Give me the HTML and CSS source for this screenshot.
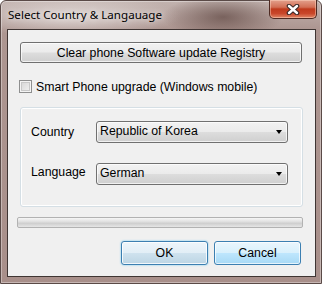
FILE: index.html
```html
<!DOCTYPE html>
<html lang="en">
<head>
    <meta charset="UTF-8">
    <title>Select Country &amp; Langauage</title>
    <link rel="stylesheet" href="styles.css">
</head>
<body>
    <div class="window">
        <div class="titlebar">
            <span class="title">Select Country &amp; Langauage</span>
            <button class="close">
                <svg width="14" height="11" viewBox="0 0 14 11">
                    <path d="M3 2 L11 9 M11 2 L3 9" stroke="#3b2a28" stroke-width="4.6" stroke-linecap="round"/>
                    <path d="M3 2 L11 9 M11 2 L3 9" stroke="#ffffff" stroke-width="2.4" stroke-linecap="round"/>
                </svg>
            </button>
        </div>

        <div class="client">
            <button class="btn btn-wide">Clear phone Software update Registry</button>

            <label class="check">
                <span class="box"></span>
                Smart Phone upgrade (Windows mobile)
            </label>

            <div class="group">
                <div class="field">
                    <span class="label">Country</span>
                    <div class="combo">Republic of Korea<span class="arrow"></span></div>
                </div>
                <div class="field">
                    <span class="label label-low">Language</span>
                    <div class="combo">German<span class="arrow"></span></div>
                </div>
            </div>

            <div class="progress"></div>

            <div class="actions">
                <button class="btn btn-ok">OK</button>
                <button class="btn btn-cancel">Cancel</button>
            </div>
        </div>
    </div>
</body>
</html>
```

FILE: styles.css
```css
body {
    margin: 0;
    background: #ffffff;
}

.window {
    width: 322px;
    height: 284px;
    box-sizing: border-box;
    display: flex;
    flex-direction: column;
    border: 1px solid #5a4a47;
    border-radius: 6px 6px 0 0;
    background:
        radial-gradient(ellipse 60px 22px at 222px 16px, rgba(80, 55, 50, 0.6), transparent),
        radial-gradient(ellipse 110px 22px at 70px 15px, rgba(232, 226, 224, 0.8), transparent),
        linear-gradient(#c2b3af, #ad9691 28px, #a88f8a);
    box-shadow: inset 0 0 0 1px rgba(255, 255, 255, 0.35);
}

.titlebar {
    height: 28px;
    display: flex;
    align-items: flex-start;
    justify-content: space-between;
    padding-left: 7px;
}

.title {
    font-family: "Noto Sans", sans-serif;
    font-size: 11.6px;
    color: #000000;
    margin-top: 6px;
    text-shadow: 0 0 6px rgba(255, 255, 255, 0.9);
}

.close {
    width: 48px;
    height: 19px;
    margin: -1px 4px 0 0;
    padding: 0;
    border: 1px solid #4e2a22;
    border-top: none;
    border-radius: 0 0 5px 5px;
    background: linear-gradient(#e3a08c 0%, #d26f55 40%, #bf3a1c 50%, #c9472a 75%, #e08767 100%);
    box-shadow: inset 0 0 0 1px rgba(255, 220, 200, 0.45);
    display: flex;
    align-items: center;
    justify-content: center;
}

.client {
    flex: 1;
    margin: 0 5px 6px 6px;
    border: 1px solid #3f3533;
    background: #f0f0f0;
    display: flex;
    flex-direction: column;
    align-items: flex-start;
    font-family: "Liberation Sans", Arial, sans-serif;
    font-size: 12.3px;
    color: #000000;
}

.btn {
    font-family: "Liberation Sans", Arial, sans-serif;
    font-size: 12.3px;
    color: #000000;
    padding: 0;
    border: 1px solid #707070;
    border-radius: 3px;
    background: linear-gradient(#f2f2f2 0%, #ebebeb 49%, #dddddd 51%, #cfcfcf 100%);
    box-shadow: inset 0 0 0 1px rgba(255, 255, 255, 0.7);
}

.btn-wide {
    width: 282px;
    height: 21px;
    margin: 12px 0 0 12px;
}

.check {
    display: flex;
    align-items: center;
    margin: 17px 0 0 11px;
    height: 13px;
}

.box {
    width: 13px;
    height: 13px;
    box-sizing: border-box;
    border: 1px solid #8e8f8f;
    background: linear-gradient(135deg, #d3d3d3, #f4f4f4);
    box-shadow: inset 0 0 0 1px #f4f4f4, inset 0 0 0 2px #c8c8c8;
    margin-right: 4px;
}

.group {
    width: 283px;
    height: 100px;
    box-sizing: border-box;
    margin: 14px 0 0 12px;
    padding: 13px 0 0 10px;
    border: 1px solid #d5dfe5;
    border-radius: 3px;
    box-shadow: inset 0 0 0 1px #ffffff;
    display: flex;
    flex-direction: column;
    gap: 20px;
}

.field {
    display: flex;
    align-items: center;
}

.label {
    width: 65px;
}

.label-low {
    margin-top: -5px;
}

.combo {
    position: relative;
    width: 192px;
    height: 22px;
    box-sizing: border-box;
    border: 1px solid #707070;
    border-radius: 3px;
    padding-left: 3px;
    line-height: 19px;
    background: linear-gradient(#f2f2f2 0%, #ebebeb 49%, #dddddd 51%, #cfcfcf 100%);
    box-shadow: inset 0 0 0 1px rgba(255, 255, 255, 0.7);
}

.arrow {
    position: absolute;
    right: 5px;
    top: 8px;
    width: 0;
    height: 0;
    border-left: 3.5px solid transparent;
    border-right: 3.5px solid transparent;
    border-top: 4px solid #000000;
}

.progress {
    width: 286px;
    height: 11px;
    box-sizing: border-box;
    margin: 10px 0 0 9px;
    border: 1px solid #b2b2b2;
    border-radius: 2px;
    background: linear-gradient(#f6f6f6 0%, #e4e4e4 35%, #cfcfcf 60%, #e6e6e6 100%);
}

.actions {
    align-self: stretch;
    display: flex;
    justify-content: flex-end;
    gap: 6px;
    margin: 13px 14px 0 0;
}

.btn-ok,
.btn-cancel {
    width: 87px;
    height: 24px;
    border-color: #3c7fb1;
}

.btn-ok {
    background: linear-gradient(#edf5fa 0%, #e2eef6 49%, #cfe2ee 51%, #bcd5e4 100%);
    box-shadow: inset 0 0 0 1px rgba(255, 255, 255, 0.8), 0 0 2px #5fc4f0;
}

.btn-cancel {
    background: linear-gradient(#eaf6fd 0%, #d9f0fc 49%, #bee6fd 51%, #a7d9f5 100%);
}
```
